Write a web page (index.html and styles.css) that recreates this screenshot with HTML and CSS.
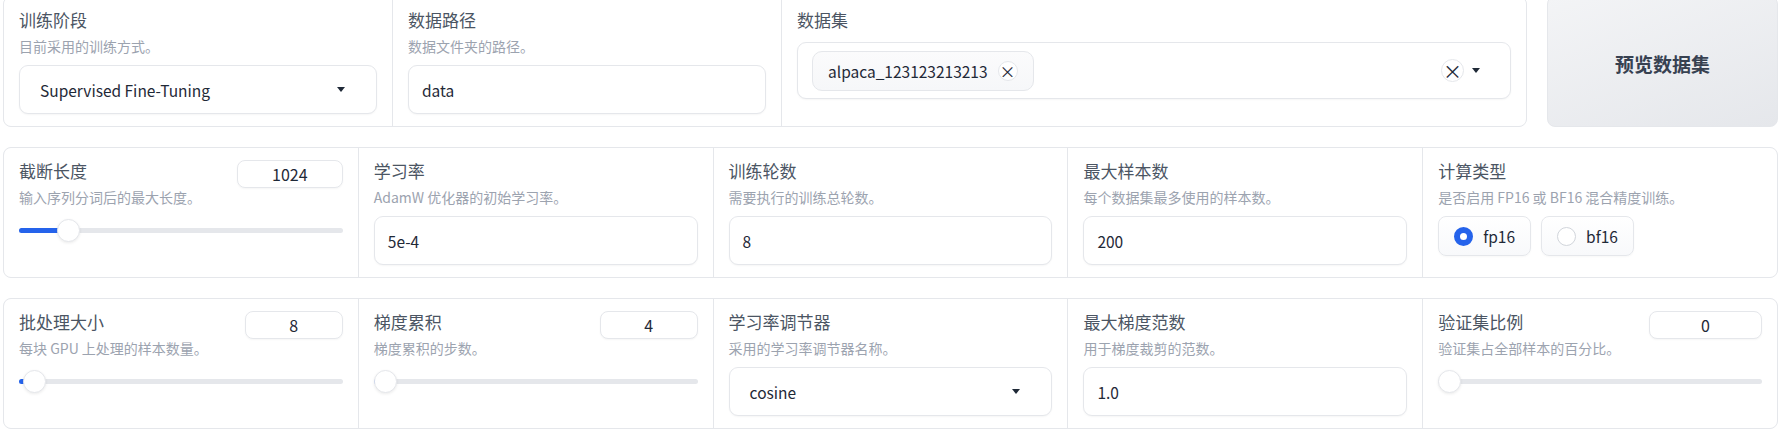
FILE: index.html
```html
<!DOCTYPE html>
<html lang="zh-CN">
<head>
<meta charset="utf-8">
<title>训练参数</title>
<link rel="stylesheet" href="styles.css">
</head>
<body>
<div class="page">
  <div class="row-top">
    <div class="panel panel--top">
      <div class="col">
        <div class="label">训练阶段</div>
        <div class="desc">目前采用的训练方式。</div>
        <div class="field field--select">
          <span class="field-text">Supervised Fine-Tuning</span>
          <span class="caret"></span>
        </div>
      </div>
      <div class="col">
        <div class="label">数据路径</div>
        <div class="desc">数据文件夹的路径。</div>
        <div class="field"><span class="field-text">data</span></div>
      </div>
      <div class="col">
        <div class="label">数据集</div>
        <div class="multi">
          <div class="chip">
            <span class="chip-text">alpaca_123123213213</span>
            <span class="chip-x">×</span>
          </div>
          <div class="multi-ctrl">
            <span class="clear-x">×</span>
            <span class="caret"></span>
          </div>
        </div>
      </div>
    </div>
    <button class="preview-btn">预览数据集</button>
  </div>

  <div class="panel panel--grid5">
    <div class="col">
      <div class="slider-head">
        <div class="head-text">
          <div class="label">截断长度</div>
          <div class="desc">输入序列分词后的最大长度。</div>
        </div>
        <div class="numbox numbox--w106">1024</div>
      </div>
      <div class="slider">
        <div class="track"><div class="fill" style="width:49px"></div></div>
        <div class="thumb" style="left:49px"></div>
      </div>
    </div>
    <div class="col">
      <div class="label">学习率</div>
      <div class="desc">AdamW 优化器的初始学习率。</div>
      <div class="field"><span class="field-text">5e-4</span></div>
    </div>
    <div class="col">
      <div class="label">训练轮数</div>
      <div class="desc">需要执行的训练总轮数。</div>
      <div class="field"><span class="field-text">8</span></div>
    </div>
    <div class="col">
      <div class="label">最大样本数</div>
      <div class="desc">每个数据集最多使用的样本数。</div>
      <div class="field"><span class="field-text">200</span></div>
    </div>
    <div class="col">
      <div class="label">计算类型</div>
      <div class="desc">是否启用 FP16 或 BF16 混合精度训练。</div>
      <div class="radios">
        <div class="radio"><span class="dot dot--on"></span><span>fp16</span></div>
        <div class="radio"><span class="dot"></span><span>bf16</span></div>
      </div>
    </div>
  </div>

  <div class="panel panel--grid5">
    <div class="col">
      <div class="slider-head">
        <div class="head-text">
          <div class="label">批处理大小</div>
          <div class="desc">每块 GPU 上处理的样本数量。</div>
        </div>
        <div class="numbox numbox--w98">8</div>
      </div>
      <div class="slider">
        <div class="track"><div class="fill" style="width:15px"></div></div>
        <div class="thumb" style="left:15px"></div>
      </div>
    </div>
    <div class="col">
      <div class="slider-head">
        <div class="head-text">
          <div class="label">梯度累积</div>
          <div class="desc">梯度累积的步数。</div>
        </div>
        <div class="numbox numbox--w98">4</div>
      </div>
      <div class="slider">
        <div class="track"><div class="fill" style="width:12px"></div></div>
        <div class="thumb" style="left:12px"></div>
      </div>
    </div>
    <div class="col">
      <div class="label">学习率调节器</div>
      <div class="desc">采用的学习率调节器名称。</div>
      <div class="field field--select">
        <span class="field-text">cosine</span>
        <span class="caret"></span>
      </div>
    </div>
    <div class="col">
      <div class="label">最大梯度范数</div>
      <div class="desc">用于梯度裁剪的范数。</div>
      <div class="field"><span class="field-text">1.0</span></div>
    </div>
    <div class="col">
      <div class="slider-head">
        <div class="head-text">
          <div class="label">验证集比例</div>
          <div class="desc">验证集占全部样本的百分比。</div>
        </div>
        <div class="numbox numbox--w113">0</div>
      </div>
      <div class="slider">
        <div class="track"><div class="fill" style="width:0px"></div></div>
        <div class="thumb" style="left:11px"></div>
      </div>
    </div>
  </div>
</div>
</body>
</html>
```

FILE: styles.css
```css
* { box-sizing: border-box; }

html, body {
  margin: 0;
  padding: 0;
  background: #ffffff;
  font-family: "Noto Sans CJK SC", "Noto Sans", sans-serif;
  color: #1f2937;
}

.page {
  display: flex;
  flex-direction: column;
  gap: 20px;
  padding: 0 9px 0 3px;
}

.row-top {
  display: flex;
  gap: 20px;
  margin-top: -4px;
}

.panel {
  border: 1px solid #e5e7eb;
  border-radius: 8px;
  background: #e5e7eb;
  display: grid;
  gap: 1px;
  overflow: hidden;
}

.panel--top {
  flex: 1;
  grid-template-columns: 97fr 97fr 186fr;
}

.panel--grid5 {
  grid-template-columns: repeat(5, 1fr);
}

.col {
  background: #ffffff;
  padding: 12px 15px 12px 15px;
  min-width: 0;
}

.label {
  font-size: 17px;
  line-height: 22px;
  color: #4b5563;
  margin-bottom: 4px;
  white-space: nowrap;
}

.desc {
  font-size: 14px;
  line-height: 22px;
  color: #9ca3af;
  white-space: nowrap;
}

.field {
  margin-top: 8px;
  height: 49px;
  border: 1px solid #e5e7eb;
  border-radius: 9px;
  background: #ffffff;
  box-shadow: 0 1px 2px rgba(0, 0, 0, 0.04);
  display: flex;
  align-items: center;
  padding: 0 13px;
  font-size: 15.5px;
  color: #1f2937;
}

.field--select {
  padding: 0 31px 0 20px;
  justify-content: space-between;
}

.caret {
  width: 0;
  height: 0;
  border-left: 4.5px solid transparent;
  border-right: 4.5px solid transparent;
  border-top: 5px solid #1f2937;
  flex: none;
}

/* multiselect */
.multi {
  margin-top: 11px;
  height: 57px;
  border: 1px solid #e5e7eb;
  border-radius: 9px;
  background: #ffffff;
  box-shadow: 0 1px 2px rgba(0, 0, 0, 0.04);
  display: flex;
  align-items: center;
  justify-content: space-between;
  padding: 0 30px 0 14px;
}

.chip {
  height: 40px;
  display: flex;
  align-items: center;
  padding: 0 15px 0 15px;
  border: 1px solid #e5e7eb;
  border-radius: 10px;
  background: linear-gradient(180deg, #fbfbfc, #f6f7f9);
  font-size: 15.5px;
  color: #1f2937;
}

.chip-x {
  width: 20px;
  height: 20px;
  margin-left: 10px;
  border: 1px solid #e5e7eb;
  border-radius: 50%;
  background: #ffffff;
  display: flex;
  align-items: center;
  justify-content: center;
  font-size: 16px;
  line-height: 1;
  color: #1f2937;
}

.multi-ctrl {
  display: flex;
  align-items: center;
  gap: 8px;
}

.clear-x {
  width: 23px;
  height: 23px;
  border: 1px solid #e5e7eb;
  border-radius: 50%;
  display: flex;
  align-items: center;
  justify-content: center;
  font-size: 19px;
  line-height: 1;
  color: #1f2937;
}

/* button */
.preview-btn {
  width: 231px;
  flex: none;
  border: 1px solid #e5e7eb;
  border-radius: 8px;
  background: linear-gradient(160deg, #f3f4f6, #e5e7eb);
  font-family: "Noto Sans CJK SC", sans-serif;
  font-weight: 700;
  font-size: 19px;
  color: #374151;
  padding: 4px 0 0 0;
}

/* slider */
.slider-head {
  display: flex;
  justify-content: space-between;
  align-items: flex-start;
}

.numbox {
  height: 28px;
  border: 1px solid #e5e7eb;
  border-radius: 8px;
  background: #ffffff;
  box-shadow: 0 1px 2px rgba(0, 0, 0, 0.04);
  display: flex;
  align-items: center;
  justify-content: center;
  font-size: 16px;
  color: #1f2937;
  flex: none;
}

.numbox--w106 { width: 106px; }
.numbox--w98 { width: 98px; }
.numbox--w113 { width: 113px; }

.slider {
  position: relative;
  margin-top: 10px;
  height: 24px;
  display: flex;
  align-items: center;
}

.track {
  width: 100%;
  height: 5px;
  border-radius: 3px;
  background: #e5e7eb;
  overflow: hidden;
}

.fill {
  height: 100%;
  background: #2563eb;
}

.thumb {
  position: absolute;
  top: 0.5px;
  width: 23px;
  height: 23px;
  margin-left: -11.5px;
  border-radius: 50%;
  background: #ffffff;
  border: 1px solid #e5e7eb;
  box-shadow: 0 1px 3px rgba(0, 0, 0, 0.08);
}

/* radio */
.radios {
  margin-top: 8px;
  display: flex;
  gap: 10px;
}

.radio {
  height: 40px;
  display: flex;
  align-items: center;
  gap: 10px;
  padding: 0 15px 0 15px;
  border: 1px solid #e5e7eb;
  border-radius: 8px;
  background: linear-gradient(180deg, #ffffff, #f8f9fb);
  box-shadow: 0 1px 2px rgba(0, 0, 0, 0.03);
  font-size: 15.5px;
  color: #1f2937;
}

.dot {
  width: 19px;
  height: 19px;
  border-radius: 50%;
  border: 1px solid #d1d5db;
  background: #ffffff;
  flex: none;
}

.dot--on {
  border: 6.5px solid #2563eb;
}
```
